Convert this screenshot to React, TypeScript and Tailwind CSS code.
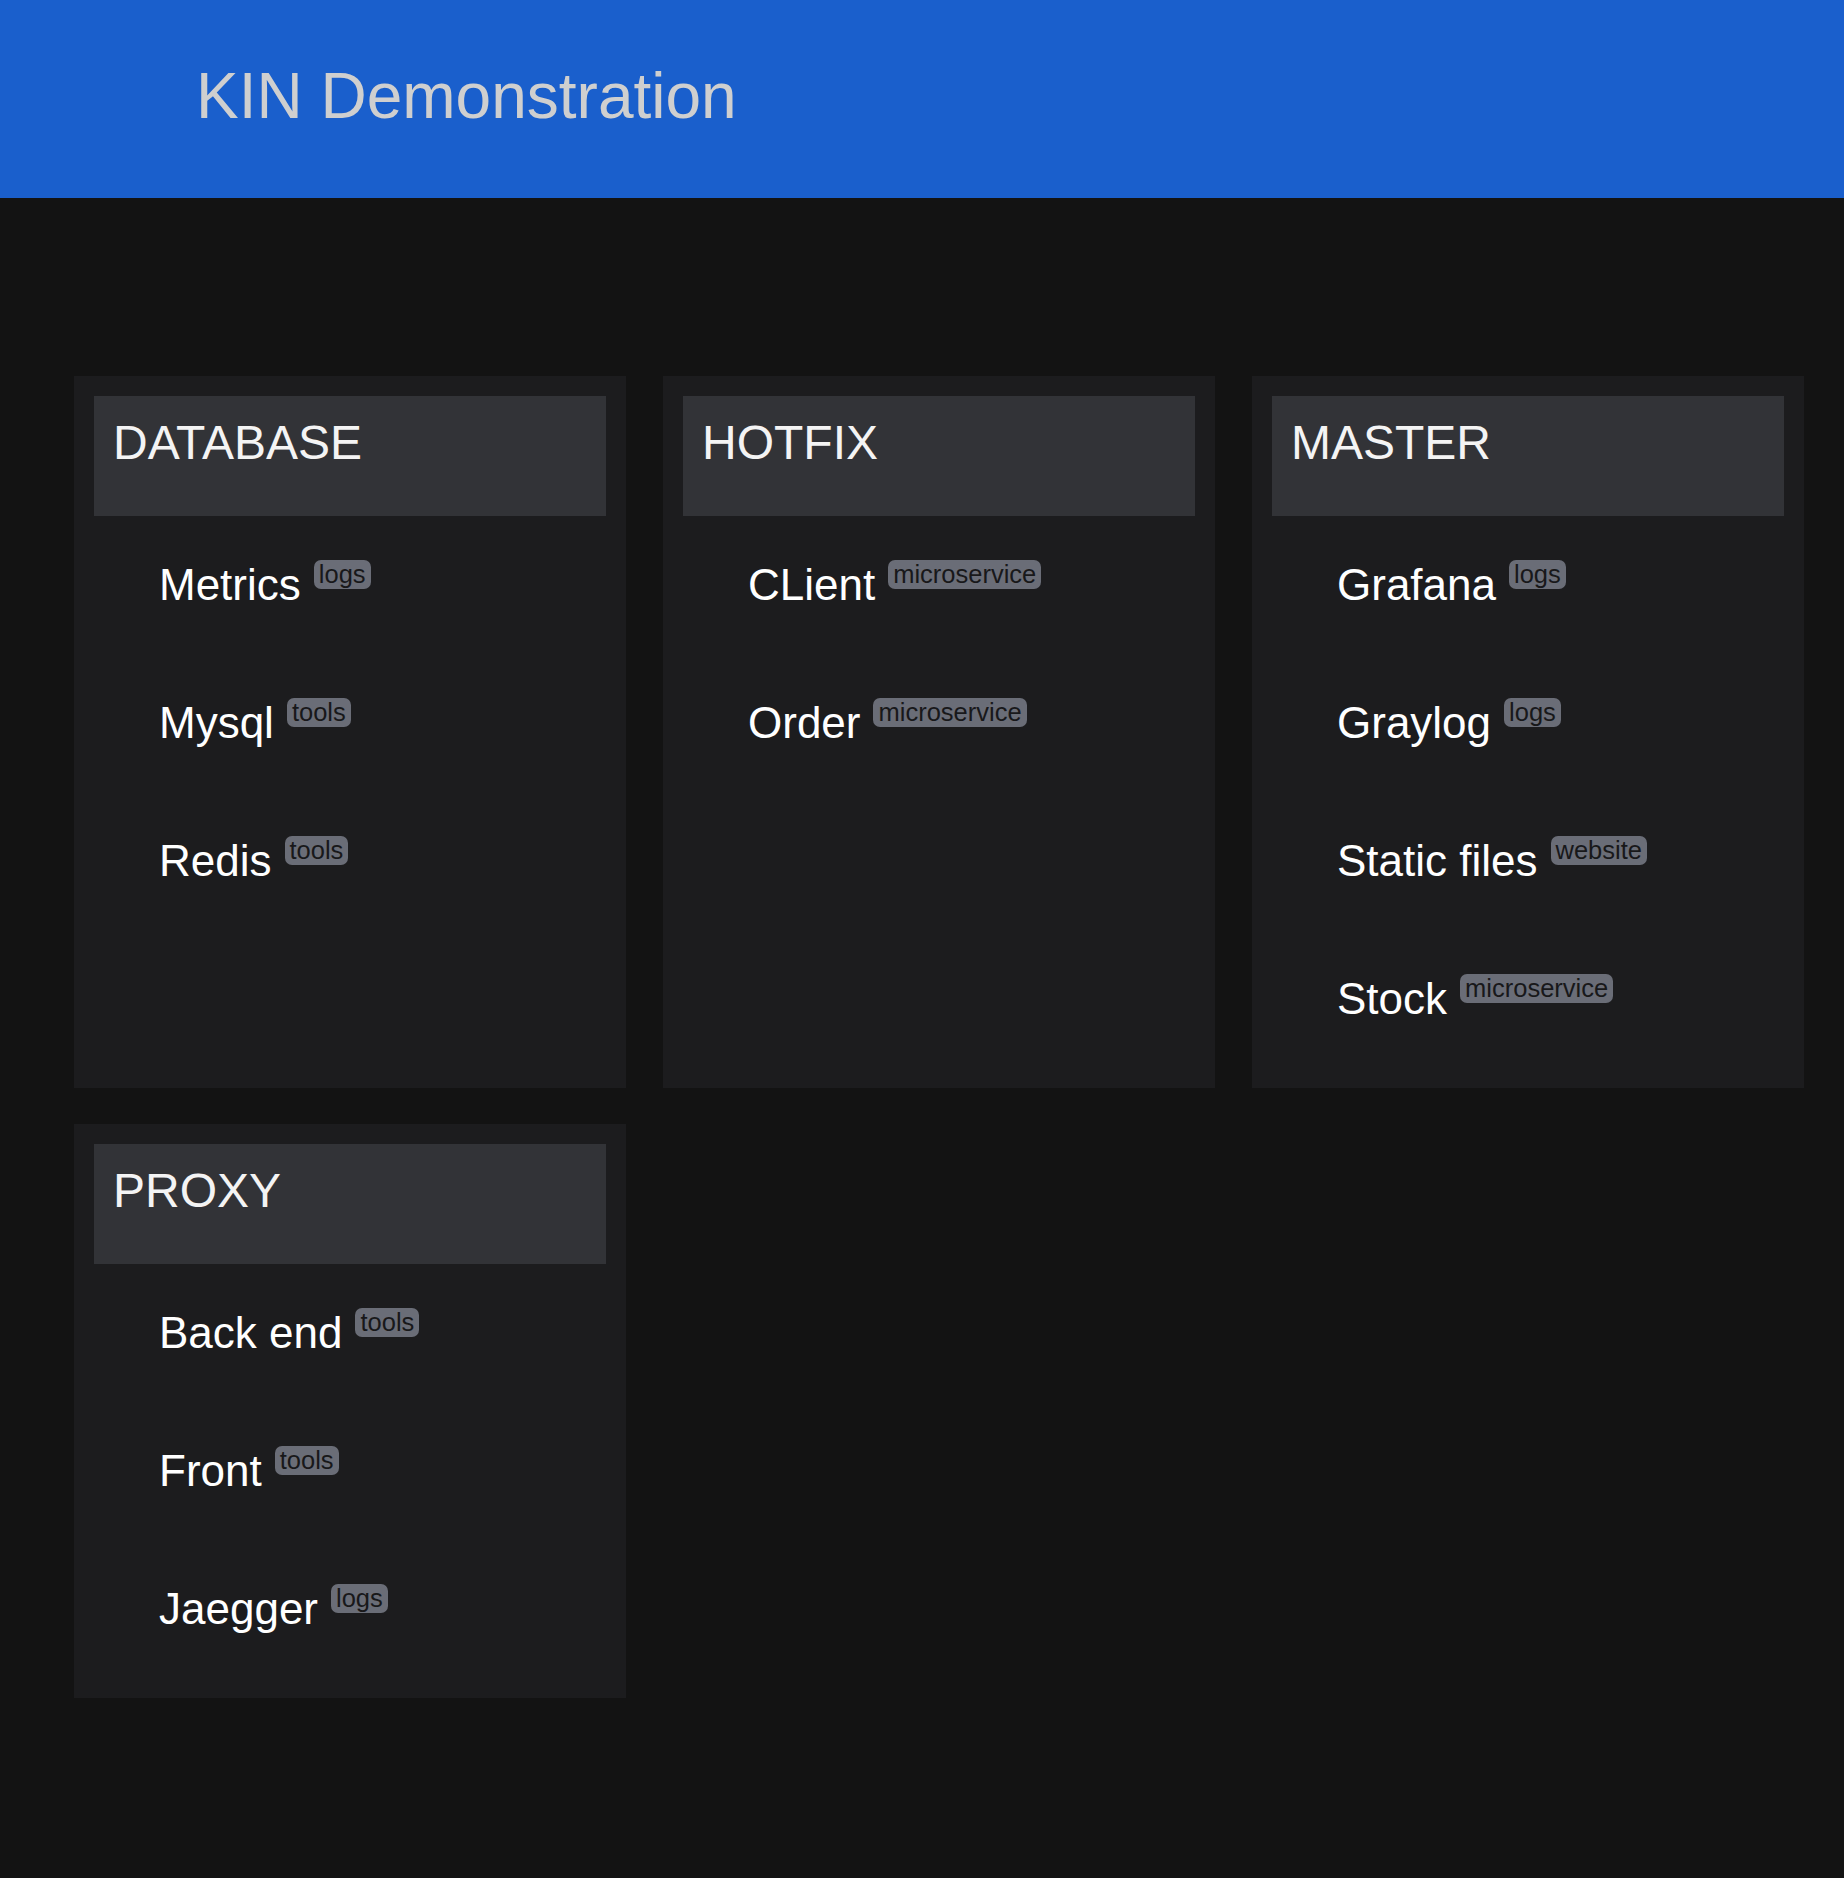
import React from "react";

type Service = {
  name: string;
  tag: string;
};

type Env = {
  title: string;
  services: Service[];
};

const envs: Env[] = [
  {
    title: "DATABASE",
    services: [
      { name: "Metrics", tag: "logs" },
      { name: "Mysql", tag: "tools" },
      { name: "Redis", tag: "tools" },
    ],
  },
  {
    title: "HOTFIX",
    services: [
      { name: "CLient", tag: "microservice" },
      { name: "Order", tag: "microservice" },
    ],
  },
  {
    title: "MASTER",
    services: [
      { name: "Grafana", tag: "logs" },
      { name: "Graylog", tag: "logs" },
      { name: "Static files", tag: "website" },
      { name: "Stock", tag: "microservice" },
    ],
  },
  {
    title: "PROXY",
    services: [
      { name: "Back end", tag: "tools" },
      { name: "Front", tag: "tools" },
      { name: "Jaegger", tag: "logs" },
    ],
  },
];

const ServiceItem = ({ name, tag }: Service) => (
  <li className="flex items-start gap-[13px] py-[44px] pl-[65px]">
    <span className="text-[44px] leading-[50px] text-white whitespace-nowrap">{name}</span>
    <span className="rounded-[7px] bg-[#6a6d77] px-[5px] text-[25.5px] leading-[29px] text-[#18181a]">
      {tag}
    </span>
  </li>
);

const EnvCard = ({ title, services }: Env) => (
  <div className="bg-[#1c1c1e] p-5">
    <div className="h-[120px] bg-[#323337] pl-[19px] pt-[19px]">
      <h2 className="text-[48px] leading-[55px] text-[#f4f4f4]">{title}</h2>
    </div>
    <ul>
      {services.map((s) => (
        <ServiceItem key={s.name} name={s.name} tag={s.tag} />
      ))}
    </ul>
  </div>
);

const App = () => {
  return (
    <div
      className="min-h-screen bg-[#131313]"
      style={{ fontFamily: '"Liberation Sans", Arial, Helvetica, sans-serif' }}
    >
      <header className="flex h-[198px] items-center bg-[#1a5fcc] pb-[6px] pl-[196px]">
        <h1 className="text-[64px] leading-[74px] text-[#cfcfcf]">KIN Demonstration</h1>
      </header>

      <main className="grid grid-cols-3 gap-x-[37px] gap-y-[36px] pb-[120px] pl-[74px] pr-[40px] pt-[178px]">
        {envs.map((env) => (
          <EnvCard key={env.title} title={env.title} services={env.services} />
        ))}
      </main>
    </div>
  );
};

export default App;
